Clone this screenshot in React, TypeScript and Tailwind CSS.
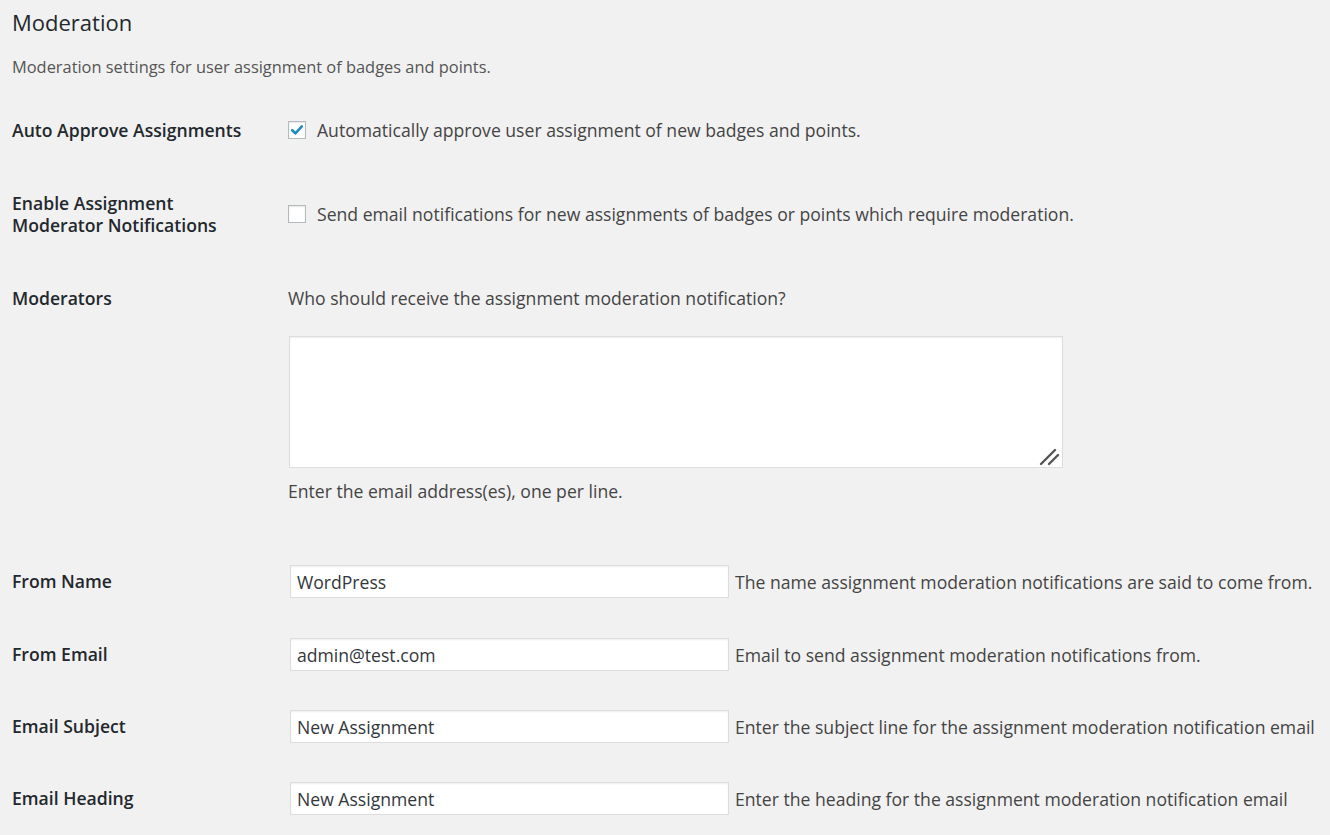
import React from "react";

const labelCls = "w-[276px] shrink-0 text-[17.6px] font-semibold text-[#23282d] leading-[22px]";
const textCls = "text-[17.6px] text-[#444] leading-[20px]";

function Checkbox({ checked }: { checked: boolean }) {
  return (
    <span className="w-[18px] h-[18px] border border-[#b4b9be] bg-white shadow-[inset_0_1px_2px_rgba(0,0,0,0.1)] flex items-center justify-center shrink-0">
      {checked && (
        <svg width="14" height="14" viewBox="0 0 14 14">
          <path d="M2.2 7.2 L5.4 10.3 L11.8 3.4" stroke="#1e8cbe" strokeWidth="2.6" fill="none" strokeLinecap="round" strokeLinejoin="round" />
        </svg>
      )}
    </span>
  );
}

function InputRow({ label, value, desc, mt }: { label: string; value: string; desc: string; mt: string }) {
  return (
    <div className={`flex items-center ${mt}`}>
      <div className={`${labelCls} -mt-[1px]`}>{label}</div>
      <div className="flex items-center">
        <div className="ml-[2px] w-[439px] h-[33px] border border-[#ddd] bg-white shadow-[inset_0_1px_2px_rgba(0,0,0,0.07)] flex items-center px-[6px] pt-[1px] text-[17.6px] text-[#32373c]">
          {value}
        </div>
        <span className={`${textCls} ml-[6px] whitespace-nowrap`}>{desc}</span>
      </div>
    </div>
  );
}

export default function App() {
  return (
    <div className="w-[1330px] h-[835px] bg-[#f1f1f1] overflow-hidden pl-[12px] pt-[9px]" style={{ fontFamily: '"Open Sans", sans-serif' }}>
      <h2 className="text-[22px] leading-[27px] text-[#23282d] font-normal">Moderation</h2>
      <p className="mt-[21px] text-[16.4px] leading-[20px] text-[#555]">Moderation settings for user assignment of badges and points.</p>

      <div className="flex items-center mt-[42px]">
        <div className={labelCls}>Auto Approve Assignments</div>
        <div className="flex items-center gap-[11px]">
          <Checkbox checked />
          <span className={textCls}>Automatically approve user assignment of new badges and points.</span>
        </div>
      </div>

      <div className="flex items-center mt-[51px]">
        <div className={labelCls}>
          Enable Assignment
          <br />
          Moderator Notifications
        </div>
        <div className="flex items-center gap-[11px]">
          <Checkbox checked={false} />
          <span className={textCls}>Send email notifications for new assignments of badges or points which require moderation.</span>
        </div>
      </div>

      <div className="flex items-start mt-[51px]">
        <div className={labelCls}>Moderators</div>
        <div className="flex flex-col">
          <span className={`${textCls} mt-[1px]`}>Who should receive the assignment moderation notification?</span>
          <div className="relative mt-[28px] ml-[1px] w-[774px] h-[132px] border border-[#ddd] bg-white shadow-[inset_0_1px_2px_rgba(0,0,0,0.07)]">
            <svg className="absolute right-[1px] bottom-[1px]" width="22" height="18" viewBox="0 0 22 18">
              <path d="M2 16 L16 2 M10 16 L19 7" stroke="#555" strokeWidth="2.4" strokeLinecap="round" />
            </svg>
          </div>
          <span className={`${textCls} mt-[13px]`}>Enter the email address(es), one per line.</span>
        </div>
      </div>

      <InputRow mt="mt-[64px]" label="From Name" value="WordPress" desc="The name assignment moderation notifications are said to come from." />
      <InputRow mt="mt-[40px]" label="From Email" value="admin@test.com" desc="Email to send assignment moderation notifications from." />
      <InputRow mt="mt-[39px]" label="Email Subject" value="New Assignment" desc="Enter the subject line for the assignment moderation notification email" />
      <InputRow mt="mt-[39px]" label="Email Heading" value="New Assignment" desc="Enter the heading for the assignment moderation notification email" />
    </div>
  );
}
